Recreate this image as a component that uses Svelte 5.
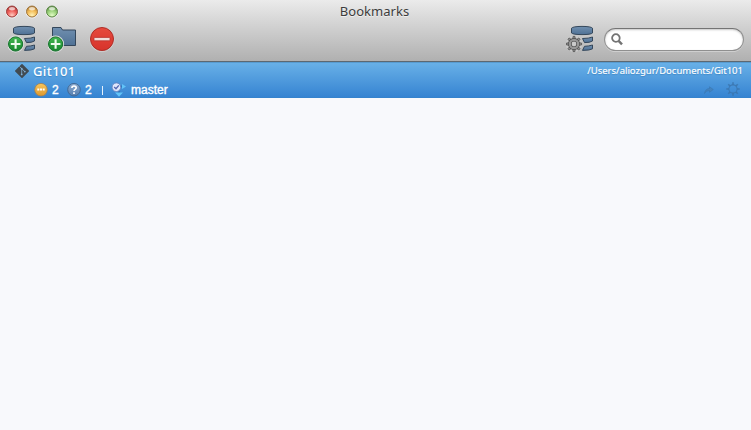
<script>
  const lights = [
    { name: 'close', dark: '#963634', mid: '#ee5c57', light: '#ffcdc2' },
    { name: 'minimize', dark: '#996d34', mid: '#f3bb55', light: '#fff3b8' },
    { name: 'zoom', dark: '#547e40', mid: '#98d078', light: '#e2fdc6' }
  ];
  const teeth = [0, 45, 90, 135, 180, 225, 270, 315];
  const files = [
    { kind: 'modified', count: 2 },
    { kind: 'untracked', count: 2 }
  ];
</script>

{#snippet database()}
  <path d="M5.5 3.2Q7 1.4 16 1.4T26.5 3.2V8Q25 9.6 16 9.6T5.5 8Z" fill="url(#steel)" stroke="#34475b" />
  <path d="M16.5 13.5Q23 13.5 26.5 12V16Q24 17.7 18.5 17.6Z" fill="url(#steel)" stroke="#34475b" />
  <path d="M18.5 21.3Q23 21.2 26.5 20V23.8Q24 25.4 16.5 25.4Z" fill="url(#steel)" stroke="#34475b" />
{/snippet}

{#snippet plus()}
  <circle cx="7.6" cy="19" r="8.5" fill="#dedfdf" />
  <circle cx="7.6" cy="19" r="7.1" fill="url(#green)" stroke="#16702c" />
  <path d="M7.6 14.2V23.8M2.8 19H12.4" stroke="#edfbed" stroke-width="2.1" />
{/snippet}

<main>
  <header>
    <div class="titlebar">
      <div class="lights">
        {#each lights as light}
          <svg width="14" height="14" viewBox="0 0 14 14" aria-label={light.name}>
            <defs>
              <radialGradient id={light.name} cx=".5" cy=".85" r=".9">
                <stop stop-color={light.light} />
                <stop offset=".5" stop-color={light.mid} />
                <stop offset="1" stop-color={light.dark} />
              </radialGradient>
            </defs>
            <circle cx="7" cy="7" r="6" fill="none" stroke="#fff" stroke-opacity=".6" />
            <circle cx="7" cy="6.5" r="5.5" fill="url(#{light.name})" stroke={light.dark} stroke-width=".9" />
            <ellipse cx="7" cy="3.7" rx="3" ry="1.7" fill="#fff" opacity=".65" />
          </svg>
        {/each}
      </div>
      <h1>Bookmarks</h1>
    </div>
    <div class="toolbar">
      <svg width="30" height="28" viewBox="0 0 30 28">
        <defs>
          <linearGradient id="steel" x2="0" y2="1"><stop stop-color="#7190b0" /><stop offset="1" stop-color="#4f7195" /></linearGradient>
          <linearGradient id="green" x2="0" y2="1"><stop stop-color="#43b750" /><stop offset="1" stop-color="#14872d" /></linearGradient>
          <linearGradient id="red" x2="0" y2="1"><stop stop-color="#e64a3e" /><stop offset="1" stop-color="#d7332b" /></linearGradient>
        </defs>
        {@render database()}
        {@render plus()}
      </svg>
      <svg width="30" height="28" viewBox="0 0 30 28">
        <path d="M4.5 2.5H13L14.5 5H27.5V20.5H4.5Z" fill="url(#steel)" stroke="#34475b" />
        {@render plus()}
      </svg>
      <svg width="28" height="28" viewBox="0 0 28 28">
        <circle cx="14" cy="14.7" r="12" fill="none" stroke="#fff" stroke-opacity=".3" />
        <circle cx="14" cy="14" r="11.5" fill="url(#red)" stroke="#ae2e27" />
        <rect x="6" y="12.4" width="16" height="3.4" rx=".7" fill="#f0dedc" stroke="#b9352e" stroke-width=".8" />
      </svg>
      <svg class="settings" width="30" height="28" viewBox="0 0 30 28">
        {@render database()}
        <circle cx="8" cy="19" r="8.3" fill="#cacaca" />
        {#each teeth as angle}
          <path d="M6.7 14.8L7.1 11.4H8.9L9.3 14.8Z" fill="#969696" stroke="#4b4b4b" stroke-width=".8" transform="rotate({angle} 8 19)" />
        {/each}
        <circle cx="8" cy="19" r="4.2" fill="none" stroke="#4b4b4b" stroke-width="3.6" />
        <circle cx="8" cy="19" r="4.2" fill="none" stroke="#969696" stroke-width="2.3" />
      </svg>
      <label class="search">
        <svg width="14" height="14" viewBox="0 0 14 14" fill="none" stroke="#737373">
          <circle cx="4.9" cy="6" r="3.8" stroke-width="1.8" />
          <path d="M7.6 8.8L11 12.3" stroke-width="2.4" />
        </svg>
        <input aria-label="Search" />
      </label>
    </div>
  </header>

  <section class="bookmark">
    <div class="line title">
      <svg class="git" width="16" height="16" viewBox="0 0 16 16">
        <rect x="2.8" y="2.8" width="10.4" height="10.4" rx=".8" fill="#414a51" transform="rotate(45 8 8)" />
        <path d="M5.5 3.5L7.7 5.7V11.5M7.7 5.7L10.8 8.6" fill="none" stroke="#82b1d8" stroke-width=".8" />
        <g fill="#82b1d8"><circle cx="7.7" cy="5.7" r=".9" /><circle cx="7.7" cy="11.4" r=".9" /><circle cx="10.8" cy="8.6" r=".9" /></g>
      </svg>
      <strong>Git101</strong>
      <span class="path">/Users/aliozgur/Documents/Git101</span>
    </div>
    <div class="line status">
      {#each files as file}
        <svg width="14" height="14" viewBox="0 0 14 14">
          {#if file.kind === 'modified'}
            <defs><linearGradient id="amber" x2="0" y2="1"><stop stop-color="#f8c65c" /><stop offset="1" stop-color="#dc982e" /></linearGradient></defs>
            <circle cx="7" cy="6.7" r="6.3" fill="url(#amber)" stroke="#a18050" stroke-width=".8" />
            <path d="M3.3 6.5H5.3M6 6.5H8M8.7 6.5H10.7" stroke="#fff" stroke-width="1.8" />
          {:else}
            <defs><linearGradient id="slate" x2="0" y2="1"><stop stop-color="#8daccf" /><stop offset="1" stop-color="#557eb0" /></linearGradient></defs>
            <circle cx="7" cy="6.7" r="6.3" fill="url(#slate)" stroke="#40658f" stroke-width=".9" />
            <path d="M4.9 5C4.9 2.4 9.2 2.5 9.2 4.8C9.2 6.4 7 6.2 7 8M7 9.2V10.9" fill="none" stroke="#fff" stroke-width="1.6" />
          {/if}
        </svg>
        <span class="count">{file.count}</span>
      {/each}
      <span class="divider"></span>
      <svg class="branch" width="16" height="16" viewBox="0 0 16 16">
        <path d="M8 4.5H12M8 6V11" stroke="#2f75bb" stroke-width="2.2" />
        <path d="M11 2L15 4.5L11 7ZM4 10.5H12L8 14.8Z" fill="#62c4f8" />
        <circle cx="5.4" cy="5.2" r="4.3" fill="#dfe7fb" stroke="#6685c1" stroke-width=".9" />
        <path d="M3.2 5L5 6.8L7.8 3.4" fill="none" stroke="#5668b2" stroke-width="1.4" />
      </svg>
      <span class="name">master</span>
      <svg class="actions" width="42" height="16" viewBox="0 0 42 16">
        <g fill="none" stroke="#3971a8" stroke-opacity=".75">
          <path d="M3.5 11.5C4 8 6 6.5 8.5 6.5V4.8L12.3 7.5L8.5 10.3V8.7C6 8.7 4.5 9.5 3.5 11.5Z" fill="#4383bf" stroke-width=".6" />
          <circle cx="32" cy="7" r="4.1" stroke-width="1.1" />
          {#each teeth as angle}
            <path d="M32 2.8V.3" stroke-width="1.6" transform="rotate({angle} 32 7)" />
          {/each}
        </g>
      </svg>
    </div>
  </section>
</main>

<style>
  :global(body) { background: #f8f9fc; }
  main { height: 430px; overflow: hidden; background: #f8f9fc; color: #fff; font-family: "Noto Sans", sans-serif; }
  svg { display: block; flex: none; }
  header { box-sizing: border-box; height: 62px; background: linear-gradient(#ebebeb, #d4d4d4 38%, #b0b0b0); border-bottom: 1px solid #5d6871; }
  .titlebar { display: grid; grid-template-columns: 1fr auto 1fr; height: 23px; align-items: center; }
  .lights { display: flex; gap: 6px; padding-left: 5px; }
  h1 { margin: 0 2px 0 0; color: #3c3c3c; font-size: 13px; line-height: 23px; font-weight: 400; letter-spacing: .05px; text-shadow: 0 1px #fff9; }
  .toolbar { display: flex; height: 32px; align-items: center; padding: 0 7px 0 8px; gap: 10px; }
  .settings { margin-left: auto; }
  .search { display: flex; box-sizing: border-box; width: 140px; height: 23px; margin-left: -2px; padding: 4px 9px 4px 6px; align-items: center; border: 1px solid #8f8f8f; border-top-color: #747474; border-radius: 12px; background: #fff; box-shadow: inset 0 1px 2px #8887, 0 1px #ddd9; }
  input { min-width: 0; width: 100%; padding: 0; border: 0; outline: 0; background: transparent; }
  .bookmark { box-sizing: border-box; height: 36px; background: linear-gradient(#68b0e7, #3684d2); border-top: 1px solid #579bd0; border-bottom: 1px solid #3583cd; }
  .line { display: flex; height: 18px; align-items: center; padding-right: 8px; }
  .title { height: 16px; padding-bottom: 2px; }
  .git { margin-left: 14px; }
  strong { margin-left: 3px; font-size: 13px; line-height: 16px; font-weight: 500; letter-spacing: .4px; text-shadow: 0 1px 1px #2469a577; }
  .path { margin-left: auto; font-size: 9.5px; line-height: 16px; text-shadow: 0 1px 1px #2469a577; -webkit-text-stroke: .15px #fff; }
  .status { padding-left: 34px; font: 12px/18px "Liberation Sans", sans-serif; -webkit-text-stroke: .35px #fff; }
  .count { width: 7px; margin: 0 8px 0 4px; }
  .divider { width: 1px; height: 9px; margin-left: 2px; background: #e5f1fc; }
  .branch { margin: 0 4px 0 8px; }
  .actions { margin-left: auto; }
</style>
